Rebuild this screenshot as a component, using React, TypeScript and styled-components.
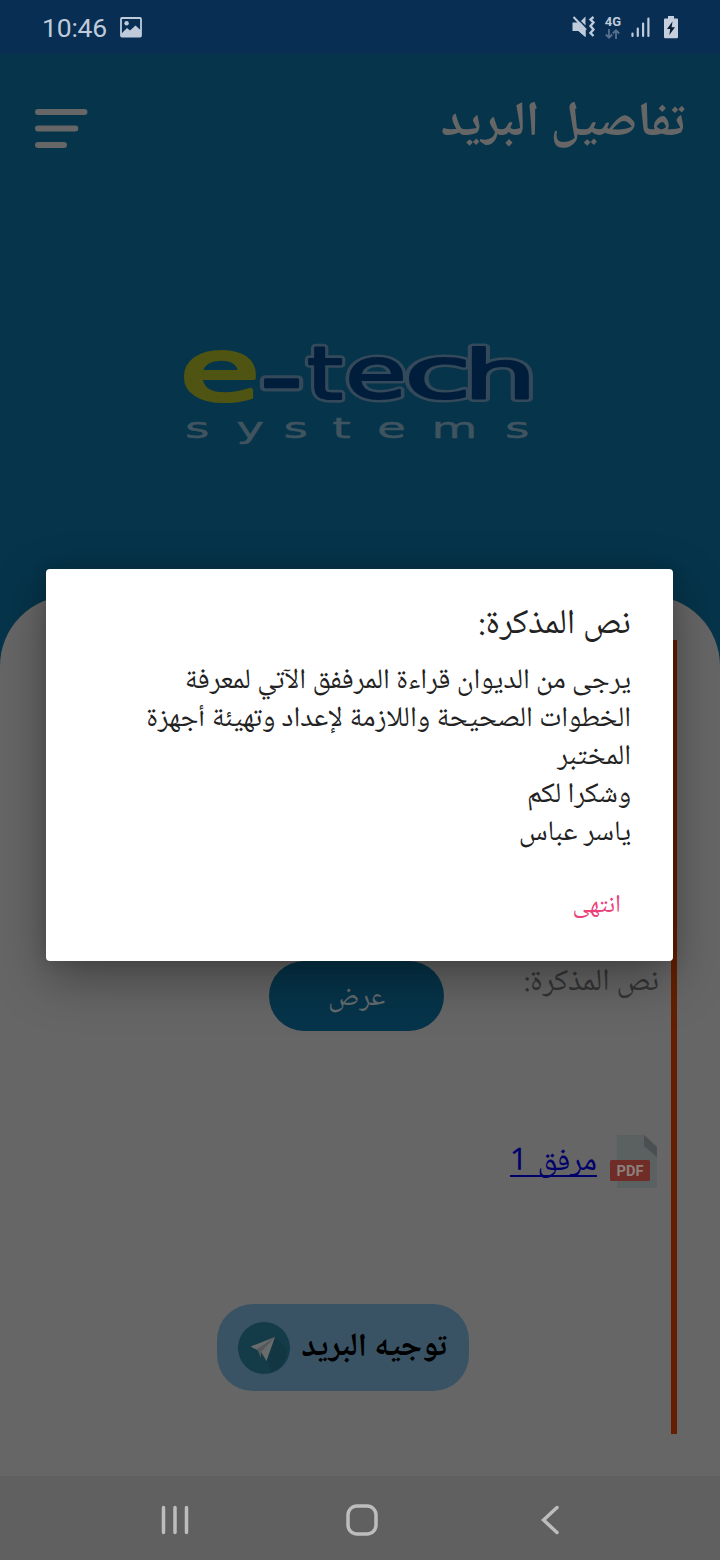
import React from "react";
import styled, { createGlobalStyle } from "styled-components";

const arabic = `"Noto Naskh Arabic UI", "Noto Naskh Arabic", "Noto Sans Arabic", Roboto, "DejaVu Sans", sans-serif`;

const GlobalStyle = createGlobalStyle`
  * { box-sizing: border-box; }
  body { margin: 0; background: #06344a; }
`;

const Screen = styled.main`
  position: relative;
  display: flex;
  flex-direction: column;
  width: 720px;
  height: 1560px;
  overflow: hidden;
  background: #06344a;
  font-family: Roboto, sans-serif;
`;

const StatusBar = styled.div`
  display: flex;
  align-items: center;
  justify-content: space-between;
  flex: none;
  height: 54px;
  padding: 0 42px 0 42px;
  background: #092e53;
  color: #bfcbda;
`;

const StatusGroup = styled.div<{ $gap: number }>`
  display: flex;
  align-items: center;
  gap: ${(p) => p.$gap}px;
`;

const Clock = styled.span`
  font-size: 26.5px;
  line-height: 32px;
  padding-top: 2px;
  letter-spacing: -0.2px;
`;

const Network = styled.div`
  display: flex;
  flex-direction: column;
  align-items: center;
  font-size: 13px;
  font-weight: 700;
  line-height: 13px;
  gap: 1px;
`;

const Hero = styled.header`
  display: flex;
  flex-direction: column;
  flex: none;
  height: 542px;
`;

const TitleBar = styled.div`
  display: flex;
  justify-content: space-between;
  align-items: flex-start;
  height: 140px;
  padding: 55px 35px 0;
`;

const Label = styled.span<{ $size: number; $line: number; $bold?: boolean; $color: string }>`
  display: block;
  direction: rtl;
  white-space: pre;
  font-family: ${arabic};
  font-size: ${(p) => p.$size}px;
  line-height: ${(p) => p.$line}px;
  font-weight: ${(p) => (p.$bold ? 700 : 400)};
  color: ${(p) => p.$color};
`;

const TitleBox = styled.h1`
  margin: -16px 0 0;
`;

const Brand = styled.div`
  display: flex;
  justify-content: center;
  padding-top: 106px;
`;

const Sheet = styled.section`
  flex: none;
  height: 880px;
  padding: 44px 43px 42px 0;
  border-radius: 70px 70px 0 0;
  background: #666;
`;

const Details = styled.div`
  display: flex;
  flex-direction: column;
  height: 794px;
  padding: 321px 11px 0 0;
  border-right: 6px solid #641f00;
`;

const NoteRow = styled.div`
  display: flex;
  justify-content: space-between;
  height: 70px;
  padding-left: 269px;
`;

const ViewButton = styled.button`
  display: flex;
  align-items: center;
  justify-content: center;
  width: 175px;
  height: 70px;
  padding: 4px 0 0;
  border: 0;
  border-radius: 35px;
  background: #06344a;
`;

const Attachment = styled.a`
  display: flex;
  align-items: center;
  justify-content: flex-end;
  gap: 13px;
  height: 54px;
  margin-top: 104px;
  padding-right: 3px;
`;

const LinkText = styled.span`
  margin-top: 2px;
  border-bottom: 2px solid #00006a;
  word-spacing: 3px;
`;

const ForwardButton = styled.button`
  display: flex;
  align-items: center;
  justify-content: space-between;
  width: 252px;
  height: 87px;
  margin: 115px 0 0 217px;
  padding: 0 22px 0 21px;
  border: 0;
  border-radius: 36px;
  background: #395365;
`;

const NavBar = styled.nav`
  display: flex;
  align-items: center;
  justify-content: space-between;
  flex: none;
  height: 84px;
  padding: 4px 161px 0 160px;
  background: #606060;
`;

const Dialog = styled.div`
  position: absolute;
  left: 46px;
  top: 569px;
  display: flex;
  flex-direction: column;
  align-items: flex-end;
  width: 627px;
  height: 392px;
  padding: 32px 42px 0;
  border-radius: 4px;
  background: #fff;
  box-shadow: 0 18px 50px rgba(0, 0, 0, 0.34), 0 0 16px rgba(0, 0, 0, 0.12);
`;

const Message = styled.div`
  display: flex;
  flex-direction: column;
  align-items: flex-end;
  margin-top: 13px;
`;

const DialogAction = styled.button`
  margin: 36px 10px 0 0;
  padding: 0;
  border: 0;
  background: none;
`;

const RowLabel = styled.div`
  padding: 1px 1px 0 0;
`;

const lines = [
  "يرجى من الديوان قراءة المرففق الآتي لمعرفة",
  "الخطوات الصحيحة واللازمة لإعداد وتهيئة أجهزة",
  "المختبر",
  "وشكرا لكم",
  "ياسر عباس",
];

const PictureIcon = () => (
  <svg width="22" height="21" viewBox="0 0 22 21">
    <rect x="1" y="1" width="20" height="18.5" rx="1" fill="none" stroke="currentColor" strokeWidth="1.8" />
    <circle cx="6.6" cy="6.3" r="2.2" fill="currentColor" />
    <path d="M1.5 16.5 7 11l3 2.5L15.5 8.5l5.5 5V19H1.5Z" fill="currentColor" />
  </svg>
);

const MutedVibrateIcon = () => (
  <svg width="23" height="22" viewBox="0 0 23 22" fill="currentColor">
    <path d="M.5 6.500H5l8.500 8.500v6L6.500 15H.5Z" />
    <path d="M5 6.500h3.500L13.500 12v9L6.500 15Z" />
    <path d="M9 5 13.500.5V9.500Z" />
    <path d="M1.500 1 14 14" stroke="currentColor" strokeWidth="2" />
    <path d="m21.500 1-3 2.500 3 3-3 3.500 3 3.500-3 3.500 3 3" fill="none" stroke="currentColor" strokeWidth="2.400" />
  </svg>
);

const DataArrows = () => (
  <svg width="15" height="10" viewBox="0 0 15 10" fill="none" stroke="#58718d" strokeWidth="1.8">
    <path d="M4 0v8.500M.8 5.500 4 8.700l3.200-3.200M11 10V1.300M7.800 4.500 11 1.300l3.200 3.200" />
  </svg>
);

const SignalIcon = () => (
  <svg width="19" height="21" viewBox="0 0 19 21" stroke="currentColor" strokeWidth="2.2" strokeLinecap="round">
    <path d="M1.500 16.500V19M6.800 11.500V19M12.100 6.500V19M17.400 1.500V19" />
  </svg>
);

const BatterySlot = styled.span`
  display: flex;
  margin-left: 4px;
`;

const BatteryIcon = () => (
  <svg width="14" height="23" viewBox="0 0 14 23">
    <path d="M4 0h6v2.500h3q1 0 1 1V21q0 1.200-1.200 1.200H1.200Q0 22.200 0 21V3.500q0-1 1-1h3Z" fill="#c5cfdd" />
    <path d="M8.500 5.500 3 13h3.200L5.300 19 11 11.300H7.600Z" fill="#0a1c33" />
  </svg>
);

const MenuIcon = () => (
  <svg width="53" height="40" viewBox="0 0 53 40" stroke="#666" strokeWidth="6" strokeLinecap="round">
    <path d="M3 3h46.500M3 19.500h37.300M3 36h26" />
  </svg>
);

type Letter = {
  char: string;
  /* target box on the canvas: left, top, right, bottom */
  box: [number, number, number, number];
  /* ink box of the letter at 100px */
  ink: [number, number, number, number];
};

const inkE: Letter["ink"] = [5.5, -56, 56.2, 1.4];

const wordmark: Letter[] = [
  { char: "-", box: [264, 378, 299, 388], ink: [4.9, -31.4, 31.2, -23.4] },
  { char: "t", box: [308, 346, 342, 400], ink: [2.7, -70.2, 36.8, 0] },
  { char: "e", box: [349, 357, 403, 400], ink: inkE },
  { char: "c", box: [409, 357, 466, 400], ink: [5.5, -56, 48.8, 1.4] },
  { char: "h", box: [472, 346, 529, 400], ink: [9.1, -76, 54.9, 0] },
];

const placeLetter = ({ box, ink }: Letter, pad: number) => {
  const sx = (box[2] - box[0]) / (ink[2] - ink[0] + pad);
  const sy = (box[3] - box[1]) / (ink[3] - ink[1] + pad);
  const tx = box[0] - (ink[0] - pad / 2) * sx;
  const ty = box[1] - (ink[1] - pad / 2) * sy;
  return `matrix(${sx} 0 0 ${sy} ${tx} ${ty})`;
};

const leadE: Letter = { char: "e", box: [184, 350, 256, 403], ink: inkE };

const Logo = () => (
  <svg width="400" height="190" viewBox="160 300 400 190" overflow="visible" fontFamily='"DejaVu Sans", sans-serif'>
    <g fontSize="100" strokeLinejoin="round">
      <text transform={placeLetter(leadE, 5)} fill="#4f5412" stroke="#4f5412" strokeWidth="5">e</text>
      {wordmark.map((l) => (
        <text key={l.char} transform={placeLetter(l, 3)} fill="#34495a" stroke="#34495a" strokeWidth="10">{l.char}</text>
      ))}
      {wordmark.map((l) => (
        <text key={l.char} transform={placeLetter(l, 3)} fill="#001e3c" stroke="#001e3c" strokeWidth="3">{l.char}</text>
      ))}
    </g>
    <g fontSize="28" fill="#405460" stroke="#405460" strokeWidth="0.4">
      <text transform="translate(185 438) scale(1.680 1)" x="0 30.500 58.600 87.600 114.300 146.700 190.500">systems</text>
    </g>
  </svg>
);

const PdfIcon = () => (
  <svg width="47" height="54" viewBox="0 0 47 54">
    <path d="M7 0h27l13 12v41H7Z" fill="#5b6060" />
    <path d="M34 0 47 12v10L34 11Z" fill="#4a5052" />
    <rect y="25" width="40" height="21" rx="1.500" fill="#702c26" />
    <text x="6.500" y="41" fontFamily="Roboto, sans-serif" fontWeight="700" fontSize="14" fill="#8b807e" textLength="27" lengthAdjust="spacingAndGlyphs">PDF</text>
  </svg>
);

const PlaneIcon = () => (
  <svg width="52" height="52" viewBox="0 0 52 52">
    <circle cx="26" cy="26" r="26" fill="#143b48" />
    <path d="M37 15 49 27Q48 44 33 50L29 38Z" fill="#123642" />
    <path d="M12.500 24.500 37 15 28.500 39 23 30Z" fill="#686c6d" />
    <path d="M19 27 37 15 23 30v6Z" fill="#55595b" />
  </svg>
);

const NavIcon = styled.svg`
  display: block;
  fill: none;
  stroke: #bdbdbd;
  stroke-width: 3.500px;
`;

const HomeIcon = styled(NavIcon)`
  margin-right: 7px;
`;

export default function App() {
  return (
    <Screen>
      <GlobalStyle />
      <StatusBar>
        <StatusGroup $gap={13}>
          <Clock>10:46</Clock>
          <PictureIcon />
        </StatusGroup>
        <StatusGroup $gap={10}>
          <MutedVibrateIcon />
          <Network>4G<DataArrows /></Network>
          <SignalIcon />
          <BatterySlot><BatteryIcon /></BatterySlot>
        </StatusGroup>
      </StatusBar>
      <Hero>
        <TitleBar>
          <MenuIcon />
          <TitleBox><Label $size={49} $line={60} $bold $color="#666">تفاصيل البريد</Label></TitleBox>
        </TitleBar>
        <Brand><Logo /></Brand>
      </Hero>
      <Sheet>
        <Details>
          <NoteRow>
            <ViewButton><Label $size={28.5} $line={40} $color="#646b6e">عرض</Label></ViewButton>
            <RowLabel><Label $size={31} $line={40} $color="#353535">نص المذكرة:</Label></RowLabel>
          </NoteRow>
          <Attachment>
            <LinkText><Label $size={31} $line={26} $color="#00006a">مرفق 1</Label></LinkText>
            <PdfIcon />
          </Attachment>
          <ForwardButton>
            <PlaneIcon />
            <Label $size={32.5} $line={40} $bold $color="#000">توجيه البريد</Label>
          </ForwardButton>
        </Details>
      </Sheet>
      <NavBar>
        <NavIcon width="30" height="30" viewBox="0 0 30 30" strokeLinecap="round"><path d="M3.500 2.500v25M15 2.500v25M26.500 2.500v25" /></NavIcon>
        <HomeIcon width="32" height="32" viewBox="0 0 32 32"><rect x="2" y="2" width="28" height="28" rx="9" /></HomeIcon>
        <NavIcon width="18" height="30" viewBox="0 0 18 30" strokeLinecap="round"><path d="M16 2.500 2.500 15 16 27.500" /></NavIcon>
      </NavBar>
      <Dialog role="dialog">
        <Label $size={35} $line={48} $color="#222">نص المذكرة:</Label>
        <Message>
          {lines.map((text) => (
            <Label key={text} $size={28.5} $line={38} $color="#222">{text}</Label>
          ))}
        </Message>
        <DialogAction><Label $size={25} $line={34} $color="#ec407a">انتهى</Label></DialogAction>
      </Dialog>
    </Screen>
  );
}
